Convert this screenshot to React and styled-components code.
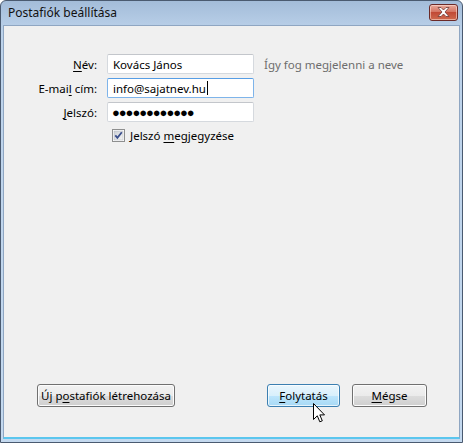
import React from "react";
import styled, { createGlobalStyle, css } from "styled-components";

const Global = createGlobalStyle`
  html, body { margin: 0; padding: 0; background: #ffffff; }
  body { font-family: "Noto Sans", "Open Sans", sans-serif; font-size: 12px; }
`;

const Window = styled.div`
  position: relative;
  width: 463px;
  height: 443px;
  box-sizing: border-box;
  border: 1px solid #4a5a70;
  border-radius: 6px 6px 0 0;
  background: linear-gradient(#a3bcd9, #bcd2ea 30px, #c4d9ef);
  padding: 0 2px 3px 2px;
  display: flex;
  flex-direction: column;
  overflow: hidden;
  font-family: "Noto Sans", sans-serif;
  font-size: 11.5px;
  color: #000;
`;

const TitleBar = styled.div`
  height: 24px;
  display: flex;
  align-items: center;
  justify-content: space-between;
  padding: 0 2px 0 5px;
  flex-shrink: 0;
`;

const Title = styled.span`
  font-size: 12px;
  color: #111;
  margin-top: -1px;
`;

const CloseButton = styled.div`
  width: 29px;
  height: 17px;
  box-sizing: border-box;
  border: 1px solid #6b2a28;
  border-radius: 3px;
  background: linear-gradient(#e9a99b, #d47563 45%, #c14a36 50%, #cf6a4e);
  box-shadow: inset 0 0 0 1px rgba(255, 230, 220, 0.55);
  display: flex;
  align-items: center;
  justify-content: center;
  margin-top: -2px;
`;

const Client = styled.div`
  flex: 1;
  background: #f0f0f0;
  border: 1px solid #8fa6c2;
  border-bottom: 2px solid #5bc6ee;
  display: flex;
  flex-direction: column;
`;

const Form = styled.div`
  display: grid;
  grid-template-columns: 91px 147px auto;
  column-gap: 10px;
  row-gap: 4px;
  align-items: center;
  margin-top: 28px;
  padding-left: 2px;
`;

const Label = styled.label`
  text-align: right;
  white-space: nowrap;
`;

const U = styled.span`
  text-decoration: underline;
  text-underline-offset: 2px;
  text-decoration-skip-ink: none;
`;

const Input = styled.div`
  height: 20px;
  box-sizing: border-box;
  border: 1px solid ${(p) => (p.$focused ? "#7eb4ea" : "#d5d9de")};
  border-top-color: ${(p) => (p.$focused ? "#569de5" : "#c3c6cb")};
  border-radius: 2px;
  background: #fff;
  display: flex;
  align-items: center;
  padding-left: 5px;
  white-space: nowrap;
  ${(p) =>
    p.$password &&
    css`
      font-size: 13px;
      letter-spacing: -1.05px;
      padding-left: 4px;
    `}
`;

const Caret = styled.span`
  display: inline-block;
  width: 1px;
  height: 14px;
  background: #000;
  margin-left: 1px;
`;

const Hint = styled.span`
  color: #6d6d6d;
  white-space: nowrap;
`;

const CheckRow = styled.div`
  grid-column: 2 / 4;
  display: flex;
  align-items: center;
  gap: 5px;
  margin-top: 2px;
  padding-left: 5px;
`;

const Spacer = styled.div`
  flex: 1;
`;

const ButtonRow = styled.div`
  display: flex;
  align-items: center;
  padding: 0 32px 0 33px;
  margin-bottom: 30px;
`;

const Button = styled.div`
  height: 23px;
  box-sizing: border-box;
  width: ${(p) => p.$w}px;
  margin-left: ${(p) => p.$ml || 0}px;
  border: 1px solid ${(p) => (p.$hot ? "#3c7fb1" : "#707070")};
  border-radius: 3px;
  display: flex;
  align-items: center;
  justify-content: center;
  white-space: nowrap;
  box-shadow: inset 0 0 0 1px ${(p) => (p.$hot ? "rgba(255,255,255,0.7)" : "#fcfcfc")};
  background: ${(p) =>
    p.$hot
      ? "linear-gradient(#eaf6fd, #d9f0fc 50%, #bee6fd 50%, #a7d9f5)"
      : "linear-gradient(#f2f2f2, #ebebeb 50%, #dddddd 50%, #cfcfcf)"};
`;

const Cursor = styled.svg`
  position: absolute;
  left: 312px;
  top: 402px;
`;

export default function App() {
  return (
    <>
      <Global />
      <Window>
        <TitleBar>
          <Title>Postafiók beállítása</Title>
          <CloseButton>
            <svg width="13" height="10" viewBox="0 0 13 10">
              <path
                d="M1 0.5 L4 0.5 L6.5 3 L9 0.5 L12 0.5 L8 5 L12 9.5 L9 9.5 L6.5 7 L4 9.5 L1 9.5 L5 5 Z"
                fill="#ffffff"
                stroke="#6f3a36"
                strokeWidth="0.8"
                strokeLinejoin="round"
              />
            </svg>
          </CloseButton>
        </TitleBar>
        <Client>
          <Form>
            <Label>
              <U>N</U>év:
            </Label>
            <Input>Kovács János</Input>
            <Hint>Így fog megjelenni a neve</Hint>

            <Label>
              E-mai<U>l</U> cím:
            </Label>
            <Input $focused>
              info@sajatnev.hu
              <Caret />
            </Input>
            <span />

            <Label>
              <U>J</U>elszó:
            </Label>
            <Input $password>●●●●●●●●●●●●</Input>
            <span />

            <span />
            <CheckRow>
              <svg width="13" height="13" viewBox="0 0 13 13">
                <defs>
                  <linearGradient id="cb" x1="0" y1="0" x2="1" y2="1">
                    <stop offset="0" stopColor="#cbcfd5" />
                    <stop offset="1" stopColor="#f6f6f6" />
                  </linearGradient>
                </defs>
                <rect x="0.5" y="0.5" width="12" height="12" fill="#fff" stroke="#8e8f8f" />
                <rect x="2" y="2" width="9" height="9" fill="url(#cb)" stroke="#b0b4ba" strokeWidth="0.5" />
                <path d="M3.3 6.3 L5.4 8.8 L9.8 3.2" fill="none" stroke="#3b4f8c" strokeWidth="1.8" />
              </svg>
              <span>
                Jelszó <U>m</U>egjegyzése
              </span>
            </CheckRow>
          </Form>
          <Spacer />
          <ButtonRow>
            <Button $w={138}>
              Új p<U>o</U>stafiók létrehozása
            </Button>
            <Spacer />
            <Button $w={73} $hot>
              <U>F</U>olytatás
            </Button>
            <Button $w={75} $ml={12}>
              <U>M</U>égse
            </Button>
          </ButtonRow>
        </Client>
        <Cursor width="13" height="21" viewBox="0 0 13 21">
          <path
            d="M0.5 0.5 L0.5 16.5 L4.3 12.8 L6.8 18.8 L9.3 17.8 L6.8 11.9 L11.5 11.9 Z"
            fill="#fff"
            stroke="#000"
            strokeWidth="1"
            strokeLinejoin="miter"
          />
        </Cursor>
      </Window>
    </>
  );
}
